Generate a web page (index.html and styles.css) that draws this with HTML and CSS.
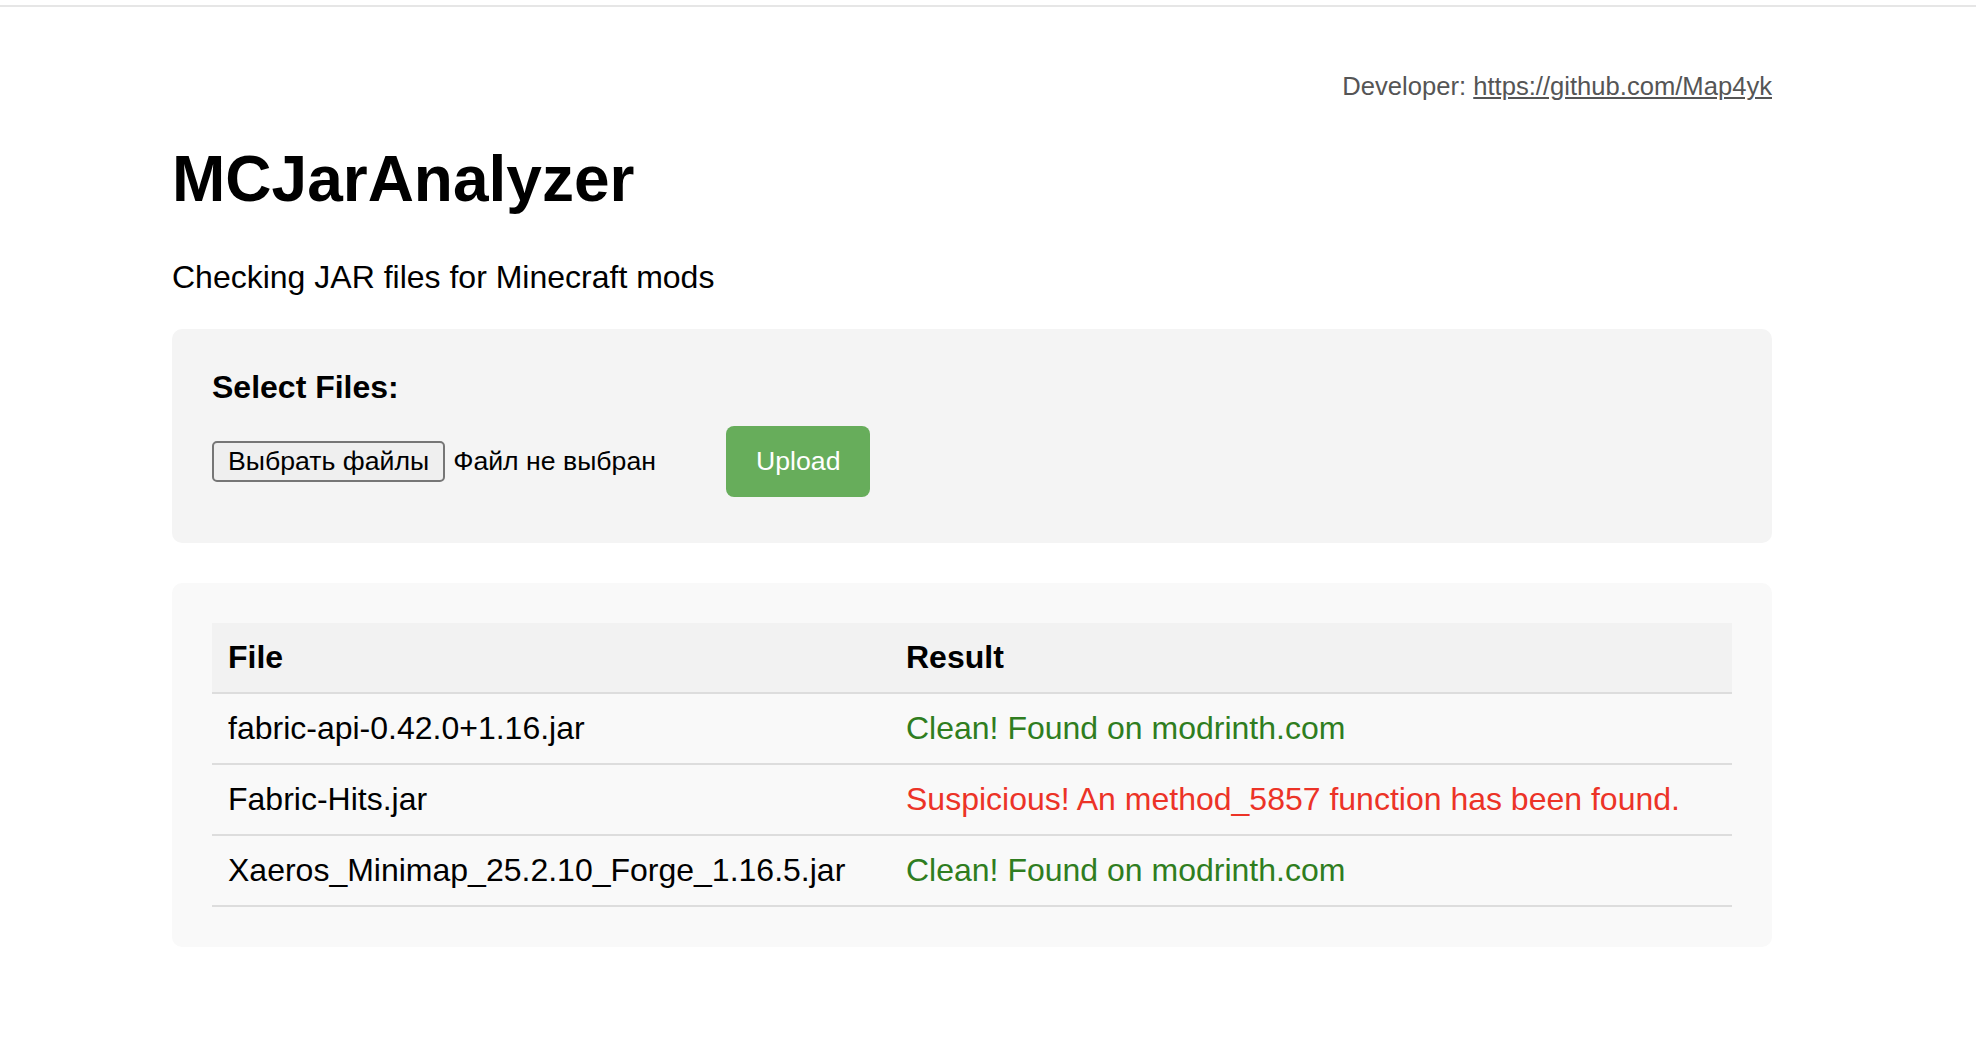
FILE: index.html
```html
<!DOCTYPE html>
<html lang="ru">
<head>
<meta charset="utf-8">
<title>MCJarAnalyzer</title>
<link rel="stylesheet" href="styles.css">
</head>
<body>
<div class="topline"></div>
<div class="container">
  <p class="dev">Developer: <a href="#">https://github.com/Map4yk</a></p>
  <h1 class="title">MCJarAnalyzer</h1>
  <p class="subtitle">Checking JAR files for Minecraft mods</p>

  <form class="upload-panel">
    <label class="upload-label">Select Files:</label>
    <div class="upload-row">
      <div class="file-input">
        <span class="file-btn">Выбрать файлы</span>
        <span class="file-text">Файл не выбран</span>
      </div>
      <button type="button" class="upload-btn">Upload</button>
    </div>
  </form>

  <div class="results-panel">
    <table class="results">
      <colgroup>
        <col class="col-file">
        <col>
      </colgroup>
      <thead>
        <tr><th>File</th><th>Result</th></tr>
      </thead>
      <tbody>
        <tr><td>fabric-api-0.42.0+1.16.jar</td><td class="clean">Clean! Found on modrinth.com</td></tr>
        <tr><td>Fabric-Hits.jar</td><td class="sus">Suspicious! An method_5857 function has been found.</td></tr>
        <tr><td>Xaeros_Minimap_25.2.10_Forge_1.16.5.jar</td><td class="clean">Clean! Found on modrinth.com</td></tr>
      </tbody>
    </table>
  </div>
</div>
</body>
</html>
```

FILE: styles.css
```css
html, body {
  margin: 0;
  padding: 0;
  background: #ffffff;
}

body {
  font-family: "Liberation Sans", Arial, "Noto Sans", sans-serif;
  color: #000;
}

.topline {
  height: 2px;
  margin-top: 5px;
  background: #e6e6e6;
}

.container {
  width: 1600px;
  margin-left: 172px;
  padding-bottom: 60px;
}

.dev {
  margin: 65px 0 0;
  font-size: 25.6px;
  text-align: right;
  color: #555;
}

.dev a {
  color: #555;
  text-decoration: underline;
}

.title {
  margin: 41px 0 0;
  font-size: 64px;
  font-weight: bold;
}

.subtitle {
  margin: 43px 0 33px;
  font-size: 32px;
}

.upload-panel {
  display: block;
  margin: 0;
  background: #f4f4f4;
  border-radius: 10px;
  padding: 40px 40px 46px;
}

.upload-label {
  display: block;
  font-size: 32px;
  font-weight: bold;
  margin-bottom: 20px;
}

.upload-row {
  display: flex;
  align-items: center;
}

.file-input {
  display: flex;
  align-items: center;
  width: 494px;
  font-size: 26.67px;
}

.file-btn {
  display: inline-flex;
  align-items: center;
  box-sizing: border-box;
  height: 41px;
  padding: 0 14px;
  background: #efefef;
  border: 2px solid #767676;
  border-radius: 5px;
  color: #000;
}

.file-text {
  margin-left: 8px;
}

.upload-btn {
  margin-left: 20px;
  font-family: inherit;
  font-size: 26.67px;
  color: #fff;
  background: #67ad5b;
  border: none;
  border-radius: 8px;
  padding: 20px 30px;
  line-height: normal;
  cursor: pointer;
}

.results-panel {
  margin-top: 40px;
  background: #f9f9f9;
  border-radius: 10px;
  padding: 40px;
}

.results {
  width: 100%;
  border-collapse: collapse;
  table-layout: fixed;
  font-size: 32px;
}

.col-file {
  width: 678px;
}

.results th,
.results td {
  text-align: left;
  padding: 16px;
  border-bottom: 2px solid #dddddd;
  white-space: nowrap;
}

.results th {
  background: #f2f2f2;
  font-weight: bold;
}

.clean {
  color: #2f7d20;
}

.sus {
  color: #ec3327;
}
```
